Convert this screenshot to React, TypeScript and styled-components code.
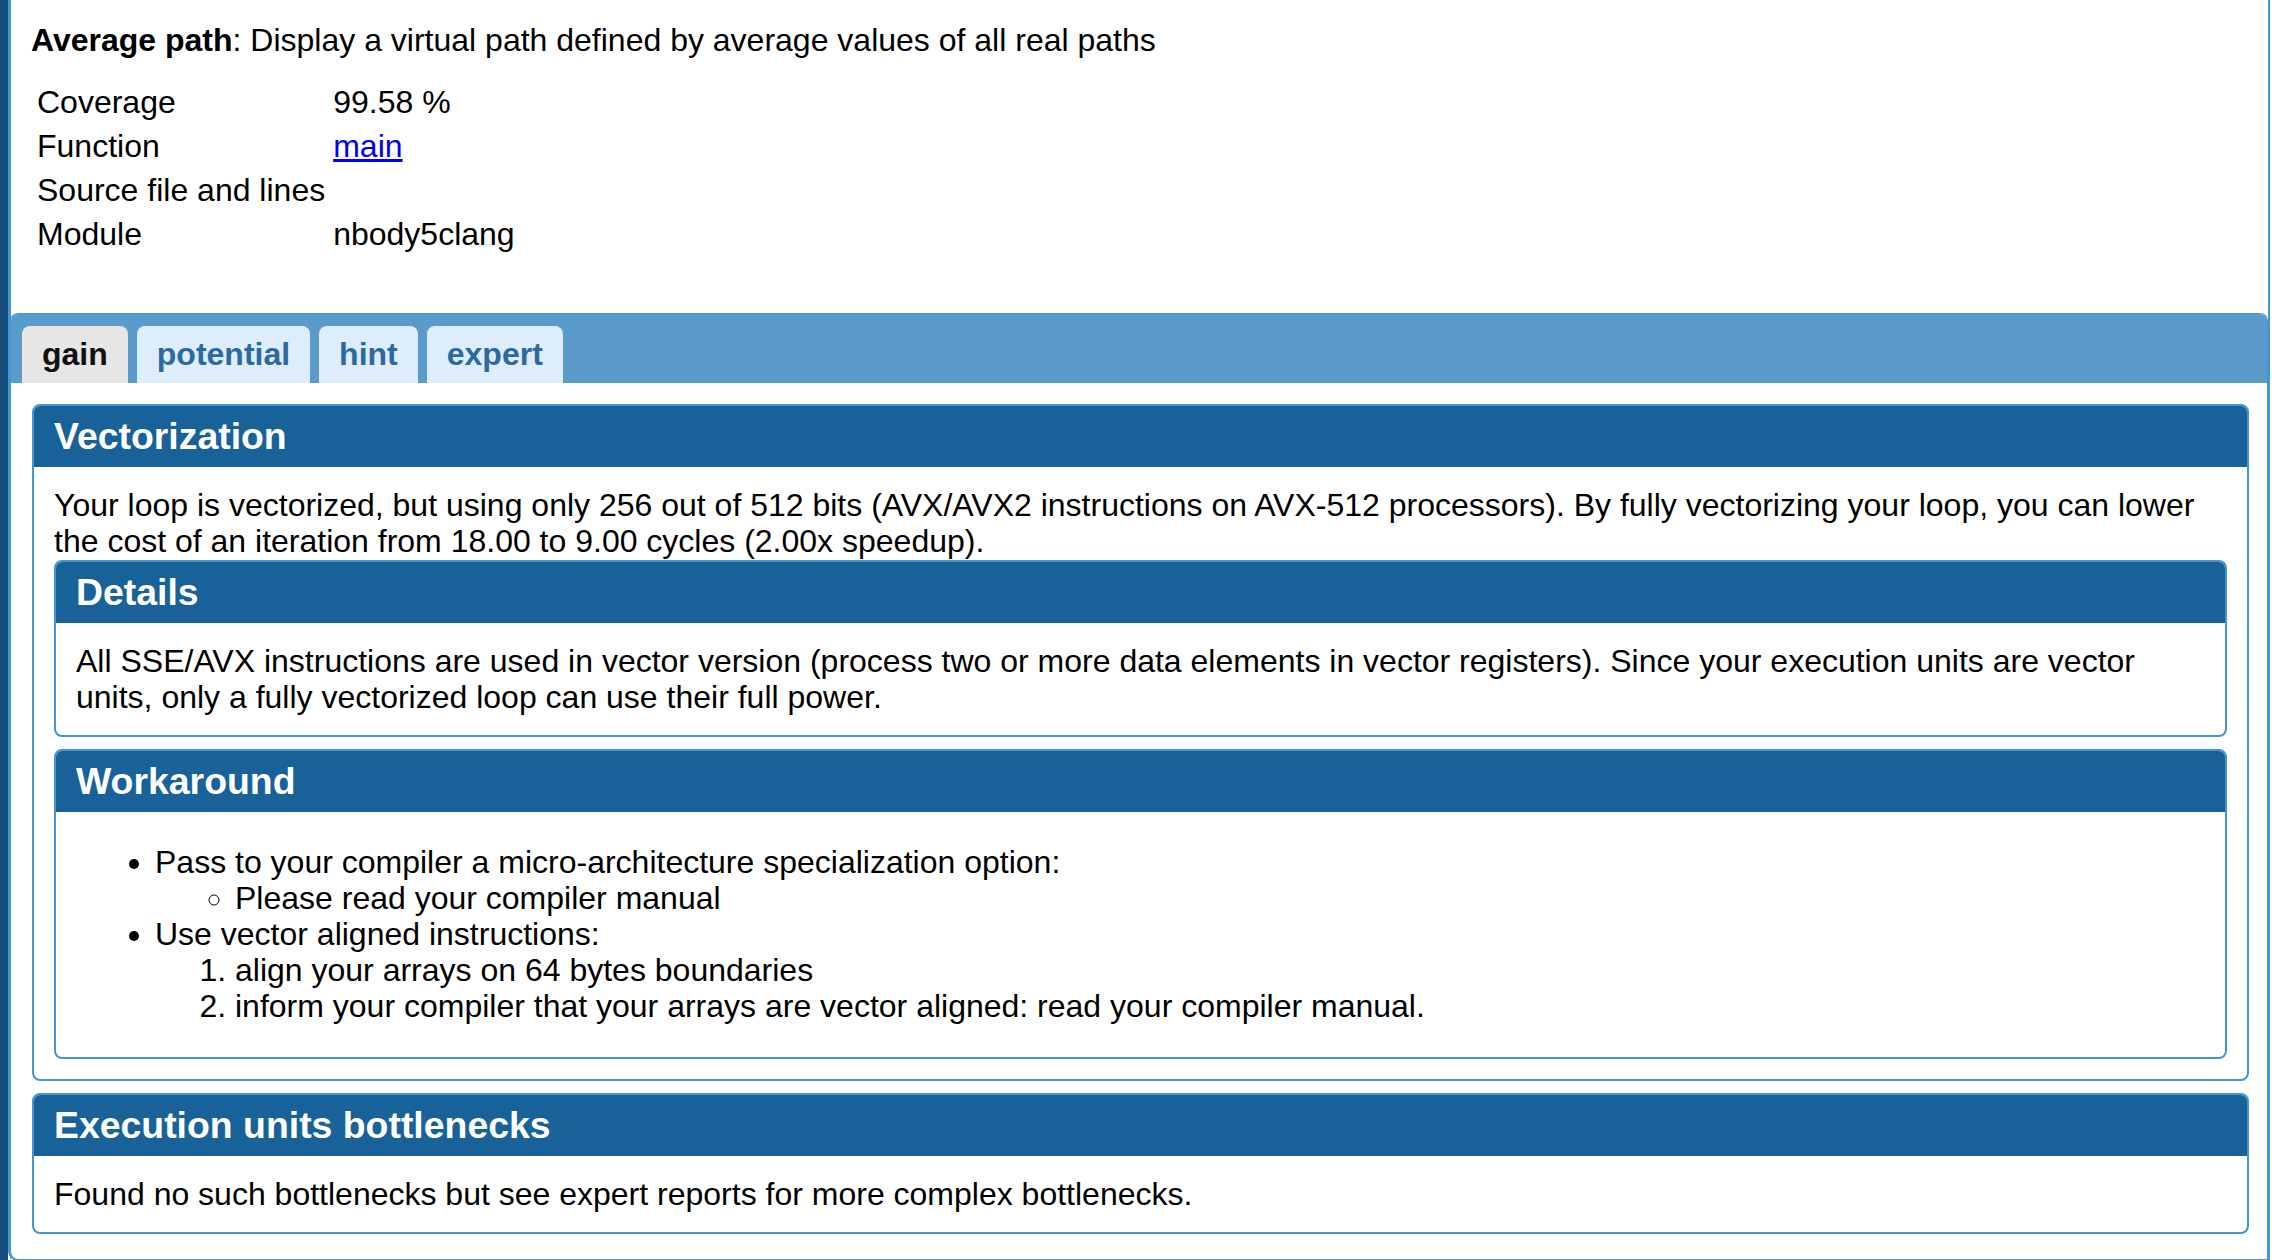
import styled, { createGlobalStyle } from 'styled-components';

const GlobalStyle = createGlobalStyle`
  html, body {
    margin: 0;
    padding: 0;
    background: #ffffff;
  }
  body {
    font-family: 'Liberation Sans', Arial, sans-serif;
    font-size: 32px;
    line-height: 36px;
    color: #000000;
  }
`;

const Page = styled.div`
  display: flex;
  min-height: 1260px;
`;

const Sidebar = styled.div`
  width: 8px;
  flex: none;
  background: #154e7c;
`;

const Main = styled.div`
  flex: 1;
  margin-right: 2px;
  border-left: 3px solid #4396d2;
  border-right: 2px solid #4396d2;
  border-bottom: 2px solid #4396d2;
  border-bottom-left-radius: 10px;
  padding-top: 22px;
  box-sizing: border-box;
`;

const Intro = styled.p`
  margin: 0 0 22px 20px;
`;

const InfoTable = styled.table`
  margin-left: 22px;
  border-collapse: collapse;
  margin-bottom: 57px;
`;

const Cell = styled.td<{ $label?: boolean }>`
  padding: 4px 4px;
  width: ${(p) => (p.$label ? '288px' : 'auto')};
  min-width: ${(p) => (p.$label ? '288px' : '0')};
  white-space: nowrap;
  vertical-align: top;
`;

const Link = styled.a`
  color: #0000ee;
  text-decoration: underline;
`;

const Tabs = styled.div`
  margin-left: -1px;
  border: 1px solid #4396d2;
  border-bottom: none;
  border-radius: 8px 8px 0 0;
`;

const TabBar = styled.div`
  display: flex;
  gap: 9px;
  padding: 12px 11px 0;
  background: #5a9bcc;
  border-radius: 7px 7px 0 0;
`;

const Tab = styled.div<{ $active?: boolean }>`
  height: 57px;
  line-height: 57px;
  padding: 0 20px;
  border-radius: 8px 8px 0 0;
  font-weight: bold;
  background: ${(p) => (p.$active ? '#e6e6e6' : '#deedfb')};
  color: ${(p) => (p.$active ? '#111111' : '#2b6aa1')};
`;

const TabBody = styled.div`
  display: flex;
  flex-direction: column;
  gap: 12px;
  padding: 21px 18px 25px 21px;
`;

const Card = styled.section`
  border: 2px solid #4396d2;
  border-radius: 8px;
  overflow: hidden;
  background: #ffffff;
`;

const CardHeader = styled.h3`
  margin: 0;
  height: 61px;
  line-height: 61px;
  padding: 0 20px;
  background: #196299;
  color: #ffffff;
  font-size: 37.4px;
  font-weight: bold;
`;

const CardBody = styled.div<{ $tight?: boolean }>`
  display: flex;
  flex-direction: column;
  gap: 12px;
  padding: ${(p) => (p.$tight ? '20px 20px 20px' : '20px')};
`;

const Text = styled.p`
  margin: 0 0 -11px;
`;

const Plain = styled.p`
  margin: 0;
`;

const BulletList = styled.ul`
  margin: 12px 0 13px;
  padding-left: 79px;
`;

const SubList = styled.ul`
  margin: 0;
  padding-left: 80px;
  list-style-type: circle;
`;

const NumList = styled.ol`
  margin: 0;
  padding-left: 80px;
`;

export default function App() {
  return (
    <>
      <GlobalStyle />
      <Page>
        <Sidebar />
        <Main>
          <Intro>
            <b>Average path</b>: Display a virtual path defined by average values of all real paths
          </Intro>
          <InfoTable>
            <tbody>
              <tr>
                <Cell $label>Coverage</Cell>
                <Cell>99.58 %</Cell>
              </tr>
              <tr>
                <Cell $label>Function</Cell>
                <Cell>
                  <Link href="#main">main</Link>
                </Cell>
              </tr>
              <tr>
                <Cell $label>Source file and lines</Cell>
                <Cell></Cell>
              </tr>
              <tr>
                <Cell $label>Module</Cell>
                <Cell>nbody5clang</Cell>
              </tr>
            </tbody>
          </InfoTable>

          <Tabs>
            <TabBar>
              <Tab $active>gain</Tab>
              <Tab>potential</Tab>
              <Tab>hint</Tab>
              <Tab>expert</Tab>
            </TabBar>
            <TabBody>
              <Card>
                <CardHeader>Vectorization</CardHeader>
                <CardBody $tight>
                  <Text>
                    Your loop is vectorized, but using only 256 out of 512 bits (AVX/AVX2 instructions on
                    AVX-512 processors). By fully vectorizing your loop, you can lower the cost of an
                    iteration from 18.00 to 9.00 cycles (2.00x speedup).
                  </Text>
                  <Card>
                    <CardHeader>Details</CardHeader>
                    <CardBody>
                      <Plain>
                        All SSE/AVX instructions are used in vector version (process two or more data
                        elements in vector registers). Since your execution units are vector units, only a
                        fully vectorized loop can use their full power.
                      </Plain>
                    </CardBody>
                  </Card>
                  <Card>
                    <CardHeader>Workaround</CardHeader>
                    <CardBody>
                      <BulletList>
                        <li>
                          Pass to your compiler a micro-architecture specialization option:
                          <SubList>
                            <li>Please read your compiler manual</li>
                          </SubList>
                        </li>
                        <li>
                          Use vector aligned instructions:
                          <NumList>
                            <li>align your arrays on 64 bytes boundaries</li>
                            <li>inform your compiler that your arrays are vector aligned: read your compiler manual.</li>
                          </NumList>
                        </li>
                      </BulletList>
                    </CardBody>
                  </Card>
                </CardBody>
              </Card>
              <Card>
                <CardHeader>Execution units bottlenecks</CardHeader>
                <CardBody>
                  <Plain>Found no such bottlenecks but see expert reports for more complex bottlenecks.</Plain>
                </CardBody>
              </Card>
            </TabBody>
          </Tabs>
        </Main>
      </Page>
    </>
  );
}
